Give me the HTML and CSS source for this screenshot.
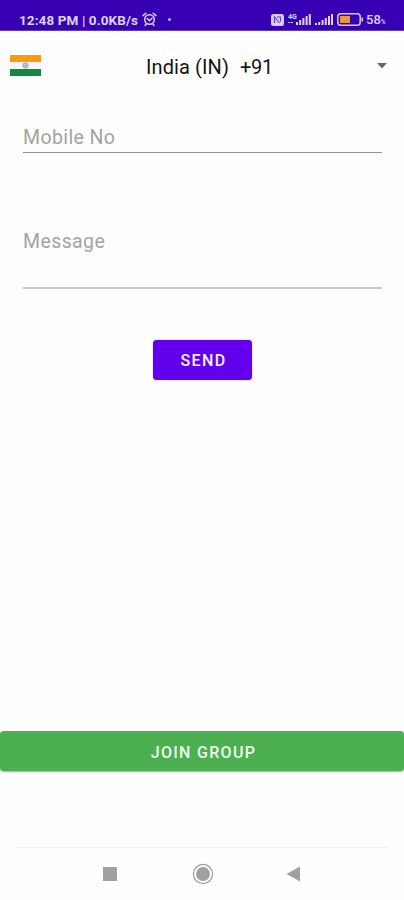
FILE: index.html
```
<!DOCTYPE html>
<html lang="en">
<head>
<meta charset="utf-8">
<meta name="viewport" content="width=device-width, initial-scale=1">
<title>Send Message</title>
<link rel="stylesheet" href="styles.css">
</head>
<body>
<div class="screen">
  <header class="status">
    <span class="clock">12:48 PM | 0.0KB/s</span>
    <svg class="alarm" width="15" height="15" viewBox="0 0 15 15" fill="none" stroke="currentColor" stroke-width="1.5" stroke-linecap="round">
      <circle cx="7.5" cy="7.500" r="4.800"/><path d="M1 3.6 3.8 1.2M14 3.6 11.2 1.2M5.2 6.500l2.2 2.2L10 6.300M4 12.3l-1 1.2M11 12.3l1 1.2"/>
    </svg>
    <span class="dot"></span>
    <svg class="nfc" width="13" height="12" viewBox="0 0 13 12">
      <rect width="13" height="12" rx="2.5" fill="#d8cdf3"/><path d="M3.5 9V3l5 6M6 3h3.5v4.5" fill="none" stroke="#5a3ac0" stroke-width="1.1"/>
    </svg>
    <span class="network"><span>4G</span><svg width="5" height="3" viewBox="0 0 5 3"><path d="M0 1.5h1.5M2.5 1.5H5" stroke="currentColor"/></svg></span>
    <svg class="signal" width="15" height="11" viewBox="0 0 15 11" fill="currentColor"><path d="M0 8h2v3H0zM3.2 6h2v5h-2zM6.4 4h2v7h-2zM9.6 2h2v9h-2zM12.8 0h2v11h-2z"/></svg>
    <svg class="signal second" width="18" height="11" viewBox="0 0 18 11" fill="currentColor"><path d="M0 9h2v2H0zM3.2 8h2v3h-2zM6.6 6h2v5h-2zM9.8 4h2v7h-2zM13 2h2v9h-2zM16 0h2v11h-2z"/></svg>
    <svg class="battery" width="27" height="13" viewBox="0 0 27 13">
      <rect x=".8" y=".8" width="22.4" height="11.4" rx="3" fill="none" stroke="#d5ccec" stroke-width="1.5"/><path d="M3 3h10v7H3z" fill="#e89a3c"/><path d="M24.5 4.5H26v4h-1.500z" fill="#d5ccec"/>
    </svg>
    <span class="charge">58<small>%</small></span>
  </header>
  <main>
    <div class="country">
      <svg class="flag" width="31" height="21" viewBox="0 0 31 21">
        <path d="M0 0h31v7H0z" fill="#ff9910"/><path d="M0 7h31v7H0z" fill="#f7f7fb"/><path d="M0 14h31v7H0z" fill="#128a3e"/>
        <circle cx="15.500" cy="10.500" r="2.700" fill="#c5cce6" stroke="#8292c4" stroke-width=".8"/><circle cx="15.500" cy="10.500" r=".8" fill="#7484bb"/>
      </svg>
      <span class="country-name">India (IN)</span><span class="country-code">+91</span>
      <svg class="caret" width="10" height="6" viewBox="0 0 10 6"><path d="M0 0h10L5 5.500z" fill="#686868"/></svg>
    </div>
    <div class="field mobile"><span>Mobile No</span></div>
    <div class="field message"><span>Message</span></div>
    <button class="send">SEND</button>
    <button class="join">JOIN GROUP</button>
  </main>
  <nav class="nav">
    <svg width="14" height="14" viewBox="0 0 14 14"><path d="M0 0h14v14H0z" fill="#a0a0a0"/></svg>
    <svg class="home" width="22" height="22" viewBox="0 0 22 22"><circle cx="11" cy="11" r="9.600" fill="none" stroke="#9b9b9b" stroke-width="1.200"/><circle cx="11" cy="11" r="6.900" fill="#a0a0a0"/></svg>
    <svg width="14" height="16" viewBox="0 0 14 16"><path d="M14 .5v15L.5 8z" fill="#a0a0a0"/></svg>
  </nav>
</div>
</body>
</html>
```
FILE: styles.css
```
* { box-sizing: border-box; }
body { margin: 0; background: #fefefe; font-family: Roboto, "Liberation Sans", sans-serif; }
.screen { width: 404px; height: 900px; display: flex; flex-direction: column; overflow: hidden; }
.status { height: 31px; padding: 9px 17px 0 19px; background: #3700b3; border-bottom: 1px solid #5c3cc0; color: #ddd3f5; display: flex; align-items: center; flex: none; white-space: nowrap; }
.clock { width: 121px; font-size: 13.500px; font-weight: 700; letter-spacing: .1px; }
.alarm { margin-left: 2px; flex: none; }
.dot { width: 3px; height: 3px; margin-left: 11px; border-radius: 50%; background: #c2b3eb; }
.nfc { margin-left: auto; flex: none; }
.network { width: 10px; margin-left: 4px; height: 13px; font-size: 7px; line-height: 8px; font-weight: 700; display: flex; flex-direction: column; flex: none; }
.signal { margin-left: -2px; flex: none; }
.signal.second { margin-left: 4px; }
.battery { margin-left: 4px; flex: none; }
.charge { width: 21px; margin-left: 2px; font-size: 13px; font-weight: 500; flex: none; }
.charge small { font-size: 6.500px; }
main { height: 816px; flex: none; display: flex; flex-direction: column; }
.country { height: 70px; padding: 1px 17px 0 10px; display: flex; align-items: center; color: #141414; font-size: 20px; white-space: nowrap; }
.flag { margin-top: -3px; flex: none; }
.country-name { margin-left: 105px; width: 94px; letter-spacing: .1px; }
.country-code { letter-spacing: -.3px; }
.caret { margin: -1px 0 0 auto; flex: none; }
.field { margin: 0 22px 0 23px; color: #a3a3a3; font-size: 19.500px; line-height: 24px; letter-spacing: .4px; border-bottom: 1px solid #929292; }
.mobile { height: 52px; padding-top: 25px; }
.message { height: 59px; margin-top: 77px; border-bottom: 2px solid #c6c6c6; }
button { border: 0; padding: 0; font-family: inherit; font-weight: 500; color: #f4f0ff; font-size: 16px; }
.send { width: 99px; height: 40px; margin: 51px auto 0 153px; border-radius: 4px; background: #6200ee; letter-spacing: 1.400px; padding: 1px 0 0 2px; box-shadow: 0 0 1px #6200ee; }
.join { width: 404px; height: 40px; margin-top: 351px; border-radius: 4px; background: #4caf50; color: #efffed; letter-spacing: 1.300px; padding: 2px 0 0 3px; box-shadow: 0 1px 2px rgba(0,0,0,.35); }
.nav { height: 53px; margin: 0 15px; padding: 0 89px 0 88px; border-top: 1px solid #f2f2f2; display: flex; justify-content: space-between; align-items: center; }
.home { margin-left: 2px; }
```
